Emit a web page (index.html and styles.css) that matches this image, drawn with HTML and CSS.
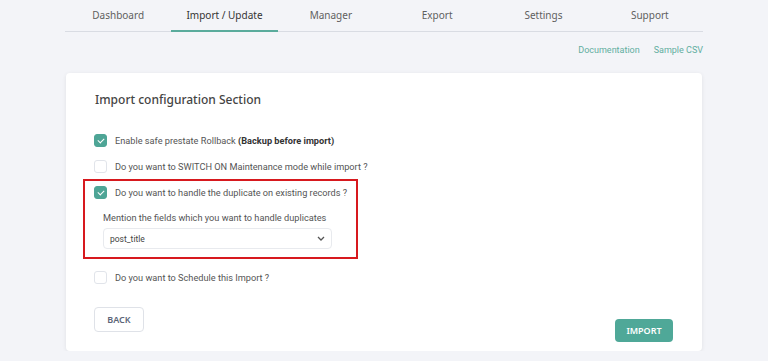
FILE: index.html
```html
<!DOCTYPE html>
<html>
<head>
    <title>Import / Update</title>
    <link rel="stylesheet" href="styles.css">
</head>
<body>
    <div class="wrap">
        <nav class="tabs">
            <a class="tab">Dashboard</a>
            <a class="tab active">Import / Update</a>
            <a class="tab">Manager</a>
            <a class="tab">Export</a>
            <a class="tab">Settings</a>
            <a class="tab">Support</a>
        </nav>
        <div class="links">
            <a>Documentation</a>
            <a>Sample CSV</a>
        </div>

        <div class="card">
            <h2>Import configuration Section</h2>

            <div class="option">
                <span class="check on"></span>
                <span>Enable safe prestate Rollback <b>(Backup before import)</b></span>
            </div>
            <div class="option">
                <span class="check"></span>
                <span>Do you want to SWITCH ON Maintenance mode while import ?</span>
            </div>
            <div class="highlight">
                <div class="option">
                    <span class="check on"></span>
                    <span>Do you want to handle the duplicate on existing records ?</span>
                </div>
                <div class="field">
                    <label>Mention the fields which you want to handle duplicates</label>
                    <div class="select">
                        <span>post_title</span>
                        <svg width="8" height="5" viewBox="0 0 8 5"><path d="M1 1l3 3 3-3" fill="none" stroke="#555" stroke-width="1.3"/></svg>
                    </div>
                </div>
            </div>
            <div class="option">
                <span class="check"></span>
                <span>Do you want to Schedule this Import ?</span>
            </div>

            <div class="actions">
                <button class="btn-back">BACK</button>
                <button class="btn-import">IMPORT</button>
            </div>
        </div>
    </div>
</body>
</html>
```

FILE: styles.css
```css
body {
    margin: 0;
    background-color: #f3f4f8;
    font-family: Roboto, Arial, sans-serif;
    color: #555;
}
.wrap {
    width: 638px;
    margin: 0 0 0 65px;
}
.tabs {
    display: flex;
    border-bottom: 1px solid #d9dce3;
    height: 32px;
    box-sizing: border-box;
}
.tab {
    flex: 1;
    text-align: center;
    font-family: "Noto Sans", sans-serif;
    font-size: 10px;
    line-height: 14px;
    color: #5f5f5f;
    padding-top: 8px;
    box-sizing: border-box;
}
.tab.active {
    color: #333;
    border-bottom: 2px solid #5aab9c;
    margin-bottom: -1px;
}
.links {
    display: flex;
    justify-content: flex-end;
    gap: 14px;
    font-size: 9px;
    line-height: 12px;
    color: #62ae9f;
    padding-top: 12px;
    height: 41px;
    box-sizing: border-box;
}
.card {
    background: #fff;
    border-radius: 4px;
    box-shadow: 0 1px 4px rgba(0,0,0,0.08);
    margin: 0 1px;
    padding: 19px 29px 0 28px;
    height: 278px;
    box-sizing: border-box;
}
.card h2 {
    font-family: "Noto Sans", sans-serif;
    font-weight: 500;
    font-size: 12px;
    line-height: 16px;
    color: #444;
    margin: 0 0 25px 1px;
}
.option {
    display: flex;
    align-items: center;
    gap: 8px;
    font-size: 9.2px;
    height: 14px;
    margin-bottom: 12px;
}
.check {
    width: 13px;
    height: 13px;
    border: 1px solid #e1e4ea;
    border-radius: 3px;
    background: #fff;
    position: relative;
    box-sizing: border-box;
    flex-shrink: 0;
}
.check.on {
    background: #4ea596;
    border-color: #4ea596;
}
.check.on::after {
    content: "";
    position: absolute;
    left: 4px;
    top: 2px;
    width: 3px;
    height: 5px;
    border: solid #fff;
    border-width: 0 1.5px 1.5px 0;
    transform: rotate(45deg);
}
.option b {
    color: #333;
}
.highlight {
    border: 2px solid #d7191e;
    margin: -6px 0 11px -11px;
    width: 275px;
    box-sizing: border-box;
    padding: 4px 0 8px 9px;
}
.highlight .option {
    margin-bottom: 13px;
}
.field {
    padding-left: 9px;
}
.field label {
    display: block;
    font-size: 9.2px;
    line-height: 12px;
    margin-bottom: 4px;
}
.select {
    width: 229px;
    height: 21px;
    border: 1px solid #e8eaee;
    border-radius: 4px;
    box-sizing: border-box;
    display: flex;
    align-items: center;
    justify-content: space-between;
    padding: 0 6px;
    font-size: 8.5px;
    color: #444;
}
.actions {
    display: flex;
    justify-content: space-between;
    align-items: flex-start;
    margin-top: 23px;
}
button {
    font-family: "Noto Sans", sans-serif;
    font-weight: 600;
    font-size: 9px;
    border-radius: 4px;
    cursor: pointer;
    padding: 0;
}
.btn-back {
    width: 50px;
    height: 25px;
    background: #fff;
    border: 1px solid #dfe2e8;
    color: #5c6578;
}
.btn-import {
    width: 58px;
    height: 23px;
    background: #4fa898;
    border: none;
    color: #fff;
    margin-top: 12px;
}
```
